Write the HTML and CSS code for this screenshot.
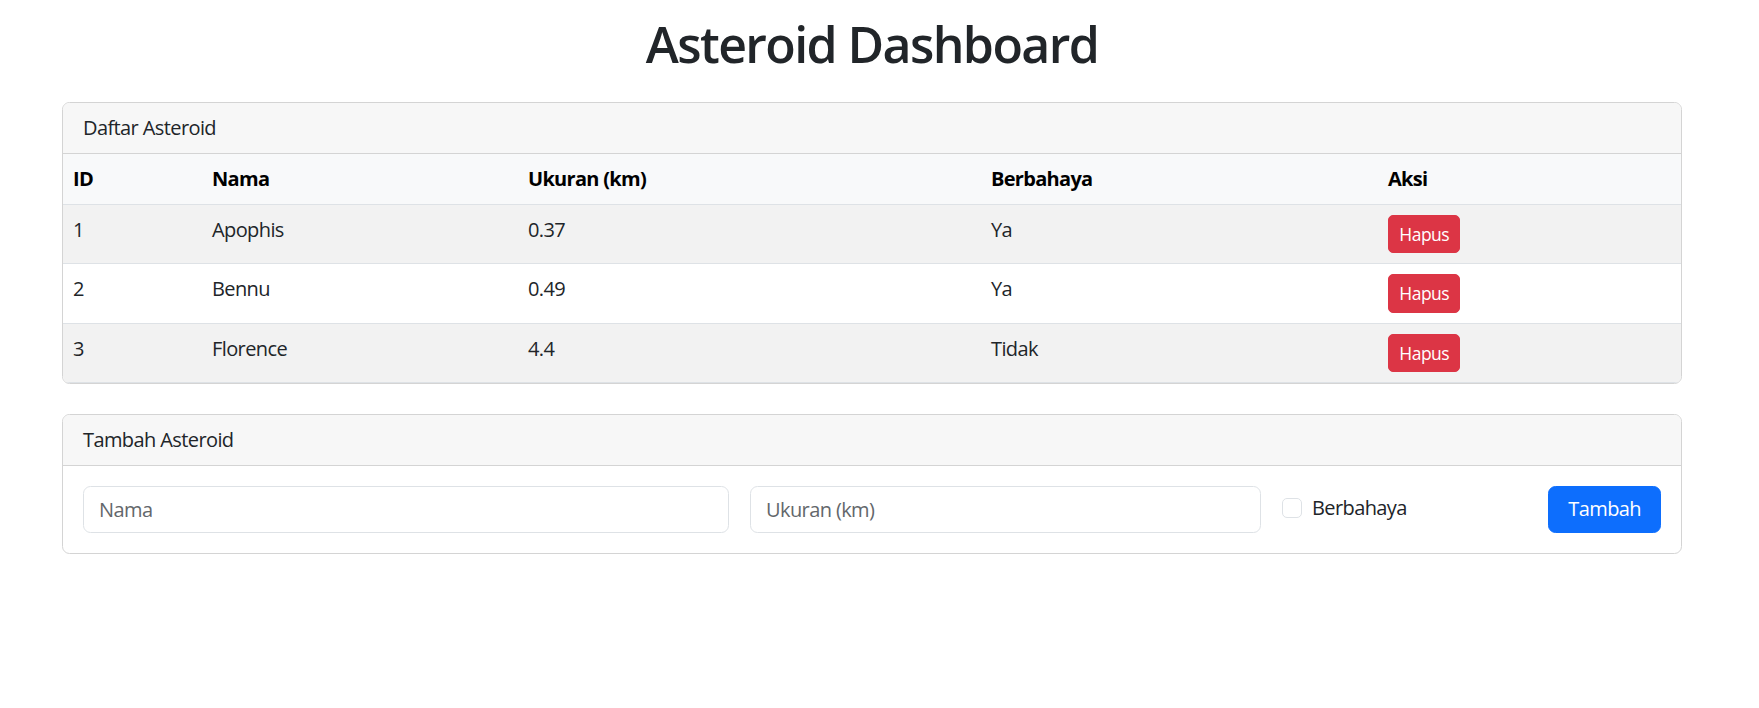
FILE: index.html
```html
<!DOCTYPE html>
<html lang="id">
<head>
<meta charset="utf-8">
<title>Asteroid Dashboard</title>
<link rel="stylesheet" href="styles.css">
</head>
<body>
<div class="container">
  <h1 class="title">Asteroid Dashboard</h1>

  <section class="card">
    <div class="card-header">Daftar Asteroid</div>
    <table class="table">
      <colgroup>
        <col class="c-id"><col class="c-nama"><col class="c-ukuran"><col class="c-bahaya"><col class="c-aksi">
      </colgroup>
      <thead>
        <tr><th>ID</th><th>Nama</th><th>Ukuran (km)</th><th>Berbahaya</th><th>Aksi</th></tr>
      </thead>
      <tbody>
        <tr class="striped"><td>1</td><td>Apophis</td><td>0.37</td><td>Ya</td><td><button class="btn btn-danger">Hapus</button></td></tr>
        <tr><td>2</td><td>Bennu</td><td>0.49</td><td>Ya</td><td><button class="btn btn-danger">Hapus</button></td></tr>
        <tr class="striped"><td>3</td><td>Florence</td><td>4.4</td><td>Tidak</td><td><button class="btn btn-danger">Hapus</button></td></tr>
      </tbody>
    </table>
  </section>

  <section class="card">
    <div class="card-header">Tambah Asteroid</div>
    <form class="card-body form-grid">
      <input class="field" type="text" placeholder="Nama">
      <input class="field" type="text" placeholder="Ukuran (km)">
      <div class="form-end">
        <label class="check"><input class="check-input" type="checkbox"><span>Berbahaya</span></label>
        <button class="btn btn-primary" type="button">Tambah</button>
      </div>
    </form>
  </section>
</div>
</body>
</html>
```

FILE: styles.css
```css
* { box-sizing: border-box; }

body {
  margin: 0;
  padding: 0 15px 0 0;
  background: #fff;
  color: #212529;
  font-family: "Open Sans", "Noto Sans", sans-serif;
  font-size: 20px;
  line-height: 30px;
  letter-spacing: -0.6px;
}

.container {
  width: 1620px;
  margin: 0 auto;
}

.title {
  margin: 14px 0 28px;
  font-size: 50px;
  line-height: 60px;
  font-weight: 600;
  letter-spacing: -1.6px;
  text-align: center;
  color: #212529;
}

.card {
  border: 1px solid #d4d4d4;
  border-radius: 7.5px;
  overflow: hidden;
  margin-bottom: 30px;
  background: #fff;
}

.card-header {
  padding: 10px 20px;
  background: #f7f7f7;
  border-bottom: 1px solid #d4d4d4;
}

.table {
  width: 100%;
  border-collapse: collapse;
  table-layout: fixed;
}

.c-id { width: 139px; }
.c-nama { width: 316px; }
.c-ukuran { width: 463px; }
.c-bahaya { width: 397px; }

.table th,
.table td {
  padding: 10px;
  text-align: left;
  vertical-align: top;
  border-bottom: 1px solid #dee2e6;
}

.table th {
  background: #f8f9fa;
  color: #000;
  font-weight: 700;
  letter-spacing: -0.7px;
}

.table tr.striped td { background: #f2f2f2; }

.btn {
  font-family: inherit;
  letter-spacing: inherit;
  border: 1px solid transparent;
  color: #fff;
  cursor: pointer;
}

.btn-danger {
  background: #dc3545;
  border-color: #dc3545;
  font-size: 17.5px;
  line-height: 26.25px;
  letter-spacing: -0.5px;
  padding: 5px 10.25px;
  border-radius: 5px;
}

.btn-primary {
  background: #0d6efd;
  border-color: #0d6efd;
  font-size: 20px;
  line-height: 30px;
  padding: 7.5px 19px;
  border-radius: 7.5px;
}

.card-body { padding: 20px; }

.form-grid {
  display: grid;
  grid-template-columns: 646px 511px 1fr;
  column-gap: 21px;
  margin: 0;
}

.field {
  height: 47px;
  padding: 7.5px 15px;
  font-family: inherit;
  font-size: 20px;
  line-height: 30px;
  letter-spacing: inherit;
  color: #212529;
  border: 1px solid #dee2e6;
  border-radius: 7.5px;
  background: #fff;
}

.field::placeholder { color: #63676b; }

.form-end {
  display: flex;
  align-items: center;
  justify-content: space-between;
}

.check {
  display: flex;
  align-items: center;
  gap: 10px;
  margin-top: -3px;
}

.check-input {
  appearance: none;
  -webkit-appearance: none;
  width: 20px;
  height: 20px;
  margin: 0;
  border: 1px solid #dee2e6;
  border-radius: 5px;
  background: #fff;
}
```
